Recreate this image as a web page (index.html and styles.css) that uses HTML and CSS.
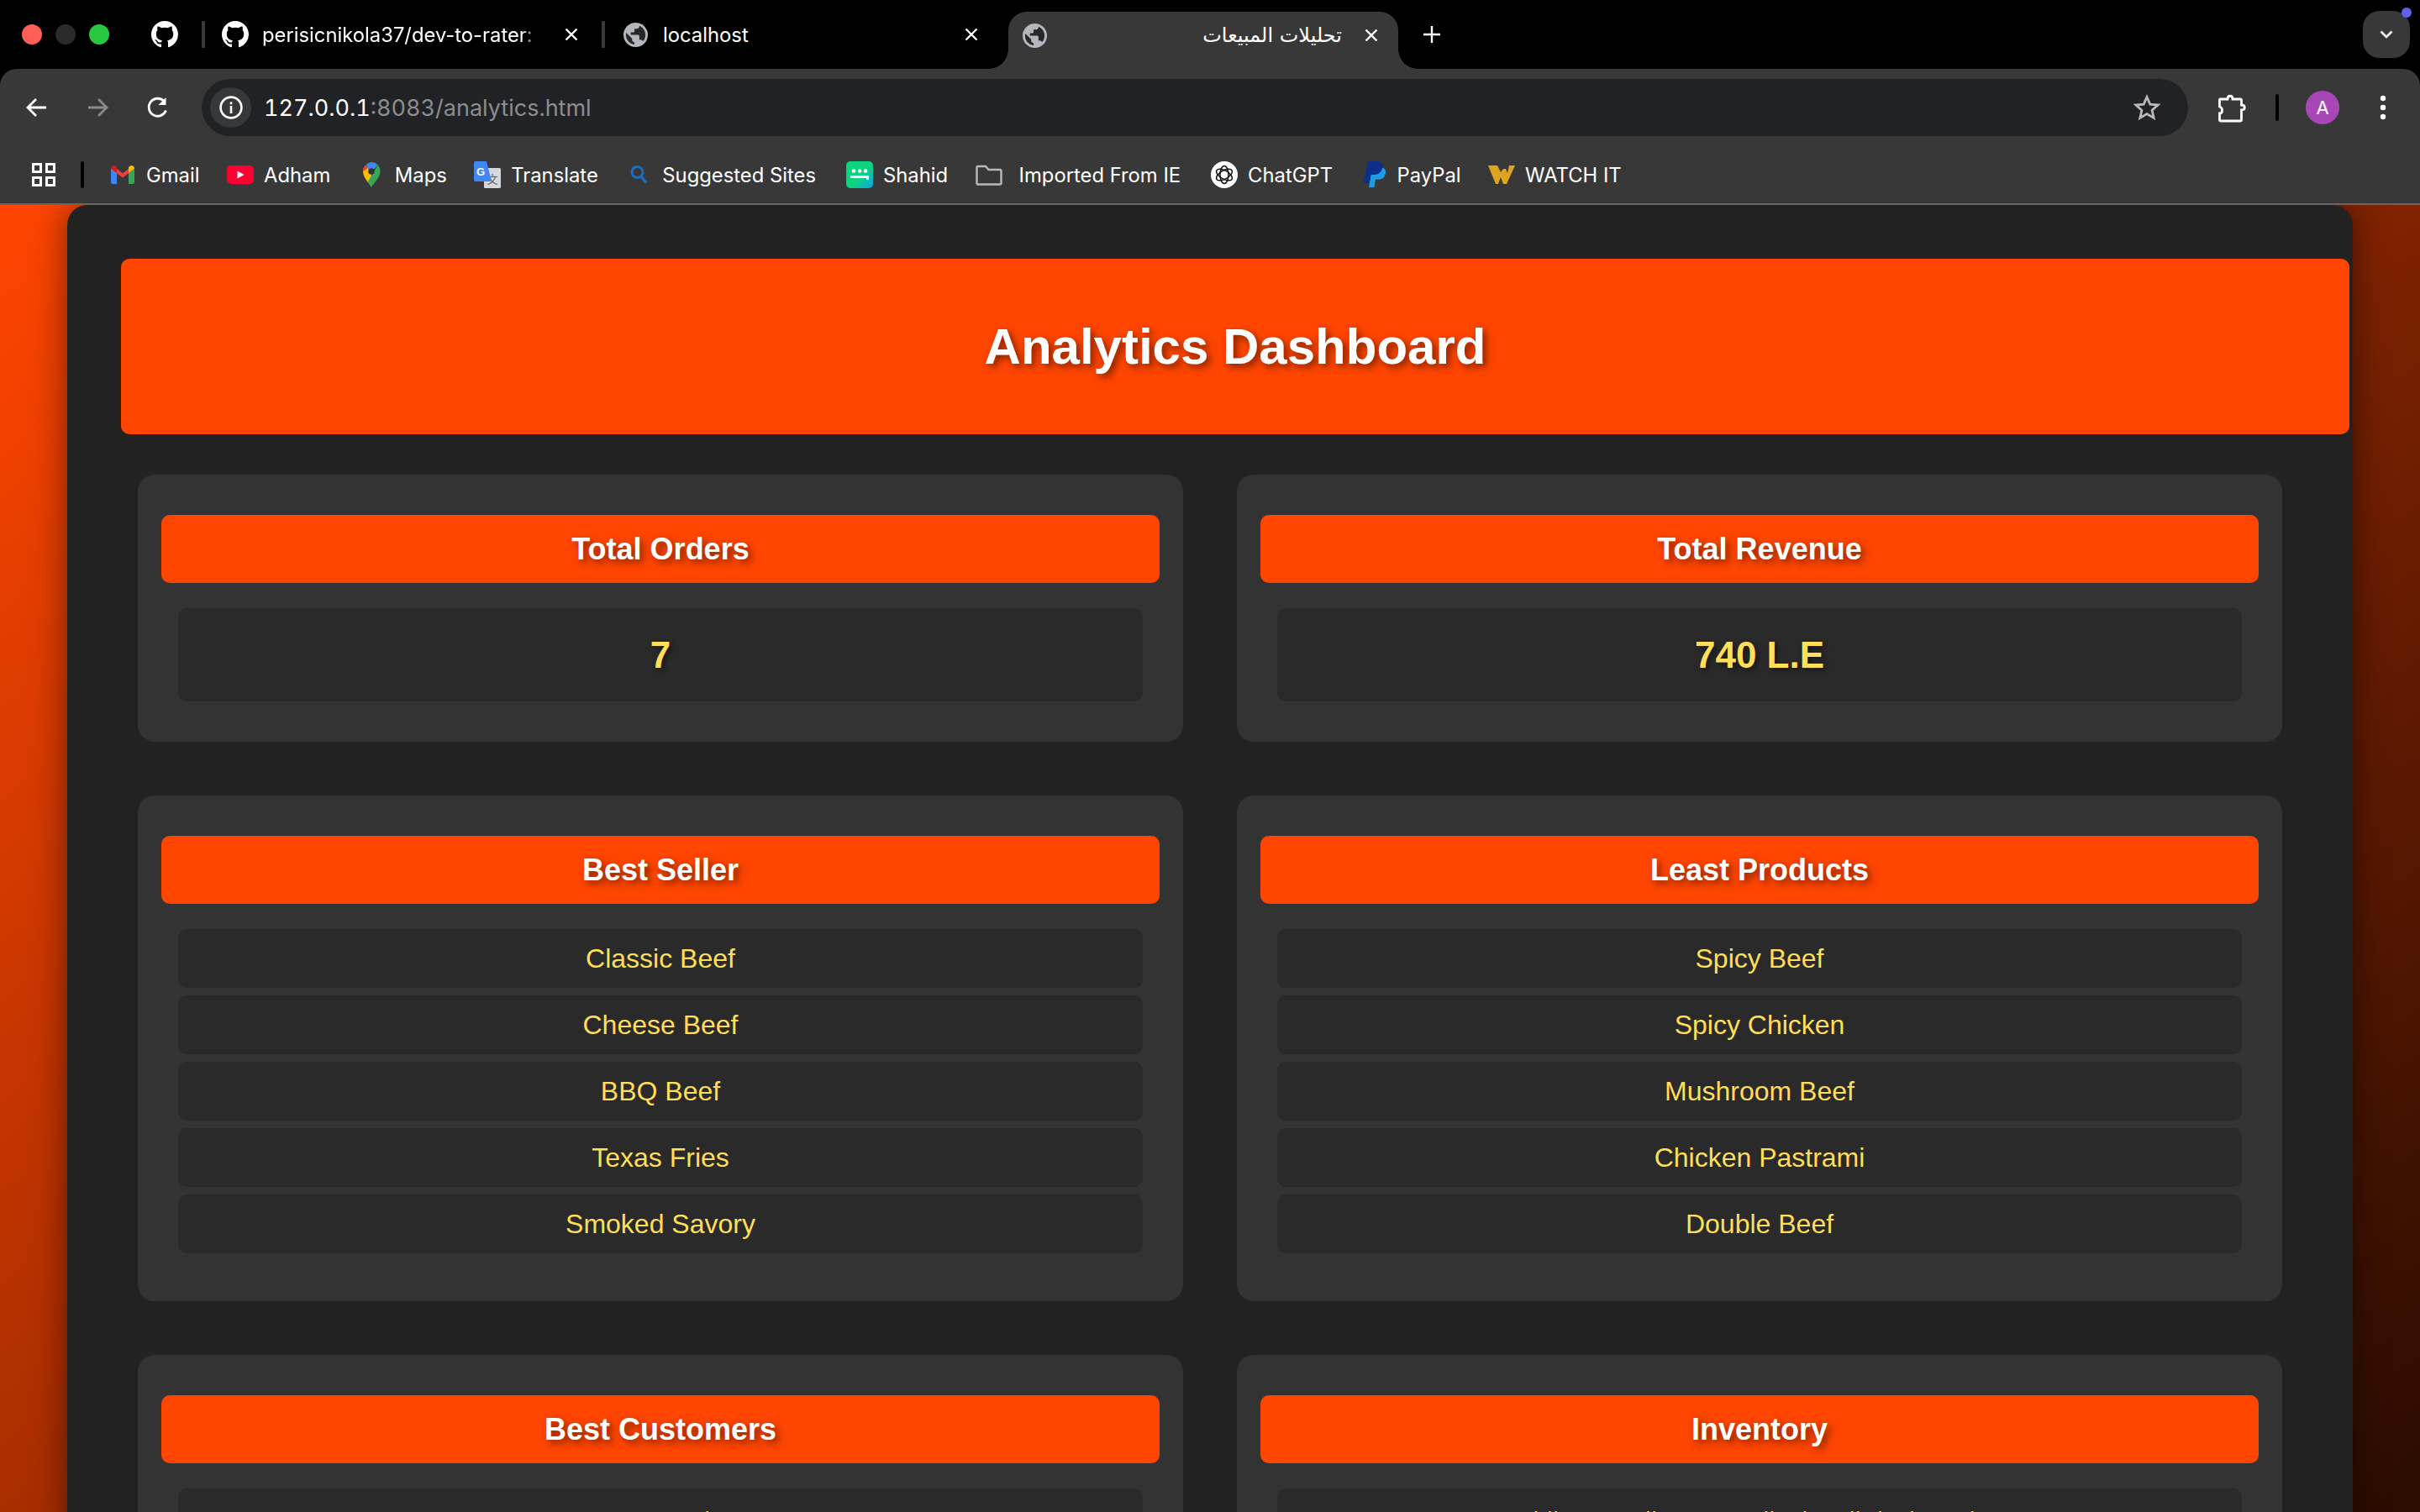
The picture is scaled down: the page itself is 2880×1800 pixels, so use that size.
FILE: index.html
```html
<!DOCTYPE html>
<html lang="en">
<head>
<meta charset="utf-8">
<title>تحليلات المبيعات</title>
<link rel="stylesheet" href="styles.css">
</head>
<body>
<svg class="defs" width="0" height="0" aria-hidden="true">
  <symbol id="gh" viewBox="0 0 16 16"><path fill="#fff" d="M8 0C3.58 0 0 3.58 0 8c0 3.54 2.29 6.53 5.47 7.59.4.07.55-.17.55-.38 0-.19-.01-.82-.01-1.49-2.01.37-2.53-.49-2.69-.94-.09-.23-.48-.94-.82-1.13-.28-.15-.68-.52-.01-.53.63-.01 1.08.58 1.23.82.72 1.21 1.87.87 2.33.66.07-.52.28-.87.51-1.07-1.78-.2-3.64-.89-3.64-3.95 0-.87.31-1.59.82-2.15-.08-.2-.36-1.02.08-2.12 0 0 .67-.21 2.2.82.64-.18 1.32-.27 2-.27.68 0 1.36.09 2 .27 1.53-1.04 2.2-.82 2.2-.82.44 1.1.16 1.92.08 2.12.51.56.82 1.27.82 2.15 0 3.07-1.87 3.75-3.65 3.95.29.25.54.73.54 1.48 0 1.07-.01 1.93-.01 2.2 0 .21.15.46.55.38A8.013 8.013 0 0016 8c0-4.42-3.58-8-8-8z"/></symbol>
  <symbol id="globe" viewBox="2 2 20 20"><circle cx="12" cy="12" r="10" fill="#b4b7bb"/><path fill="#26282b" d="M11 19.93c-3.95-.49-7-3.85-7-7.93 0-.62.08-1.21.21-1.79L9 15v1c0 1.1.9 2 2 2v1.93z"/><path fill="#26282b" d="M17.9 17.39c-.26-.81-1-1.39-1.9-1.39h-1v-3c0-.55-.45-1-1-1H8v-2h2c.55 0 1-.45 1-1V7h2c1.1 0 2-.9 2-2v-.41c2.93 1.19 5 4.06 5 7.41 0 2.08-.8 3.97-2.1 5.39z"/></symbol>
  <symbol id="close" viewBox="0 0 18 18"><path d="M2.5 2.5l13 13M15.5 2.5l-13 13" stroke="#fff" stroke-width="2.4" fill="none"/></symbol>
</svg>
<div class="app">
  <header class="tabstrip">
    <div class="traffic">
      <span class="light red"></span><span class="light grey"></span><span class="light green"></span>
    </div>
    <div class="pinned"><svg class="fav"><use href="#gh"/></svg></div>
    <span class="tabsep"></span>
    <div class="tab tab-gh">
      <svg class="fav"><use href="#gh"/></svg>
      <span class="tabtitle fade">perisicnikola37/dev-to-rater: A tool</span>
      <svg class="tabclose"><use href="#close"/></svg>
    </div>
    <span class="tabsep"></span>
    <div class="tab tab-local">
      <svg class="fav-globe"><use href="#globe"/></svg>
      <span class="tabtitle">localhost</span>
      <svg class="tabclose"><use href="#close"/></svg>
    </div>
    <div class="tab tab-active">
      <svg class="fav-globe"><use href="#globe"/></svg>
      <span class="tabtitle arabic" dir="rtl">تحليلات المبيعات</span>
      <svg class="tabclose"><use href="#close"/></svg>
    </div>
    <svg class="newtab" viewBox="0 0 20 20"><path d="M10 0v20M0 10h20" stroke="#fff" stroke-width="2.4"/></svg>
    <div class="tabsearch">
      <svg viewBox="0 0 16 10" class="chev"><path d="M1.5 1.5L8 8l6.5-6.5" fill="none" stroke="#fff" stroke-width="2.6"/></svg>
      <span class="notify"></span>
    </div>
  </header>

  <div class="toolbar">
    <div class="navrow">
      <svg class="nav" viewBox="0 0 32 32"><path d="M27 16H6M15 6L5 16l10 10" fill="none" stroke="#fff" stroke-width="2.8"/></svg>
      <svg class="nav" viewBox="0 0 32 32"><path d="M5 16h21M17 6l10 10-10 10" fill="none" stroke="#8b8b8b" stroke-width="2.8"/></svg>
      <svg class="nav" viewBox="0 0 32 32"><path d="M25.5 19.5A10.5 10.5 0 1 1 23.4 8.6" fill="none" stroke="#fff" stroke-width="2.8"/><path d="M25.5 4v9h-9z" fill="#fff"/></svg>
      <div class="omnibox">
        <span class="infochip"><svg viewBox="0 0 28 28" class="info"><circle cx="14" cy="14" r="12.4" fill="none" stroke="#fff" stroke-width="2.6"/><rect x="12.7" y="12" width="2.6" height="9" fill="#fff"/><rect x="12.7" y="7.4" width="2.6" height="2.8" fill="#fff"/></svg></span>
        <span class="url"><span class="url-host">127.0.0.1</span>:8083/analytics.html</span>
        <svg class="star" viewBox="0 0 32 32"><path d="M16 3.5l3.8 8.6 9.3.9-7 6.2 2.1 9.2-8.2-4.8-8.2 4.8 2.1-9.2-7-6.2 9.3-.9z" fill="none" stroke="#b9b9b9" stroke-width="2.8"/></svg>
      </div>
      <svg class="puzzle" viewBox="0 0 34 36"><path d="M2 8h9c0-5 6-5 6 0h9c1 0 1.500.5 1.500 1.500V15c5 0 5 6 0 6v11.500c0 1-.5 1.500-1.500 1.500H3c-1 0-1.500-.5-1.500-1.500V25c4 0 4-7 0-8V9.500C1.500 8.500 1.500 8 2 8z" fill="none" stroke="#fff" stroke-width="2.800"/></svg>
      <span class="toolsep"></span>
      <span class="avatar">A</span>
      <svg class="kebab" viewBox="0 0 8 30"><circle cx="4" cy="4" r="3.200" fill="#fff"/><circle cx="4" cy="15" r="3.200" fill="#fff"/><circle cx="4" cy="26" r="3.200" fill="#fff"/></svg>
    </div>
    <nav class="bookmarks">
      <svg class="apps" viewBox="0 0 28 28"><g fill="none" stroke="#fff" stroke-width="3"><rect x="1.500" y="1.500" width="9" height="9"/><rect x="17.500" y="1.500" width="9" height="9"/><rect x="1.500" y="17.500" width="9" height="9"/><rect x="17.500" y="17.500" width="9" height="9"/></g></svg>
      <span class="marksep"></span>
      <a class="mark">
        <svg class="bm" viewBox="0 0 32 32"><path d="M2 8h7v19H4a2 2 0 0 1-2-2z" fill="#4285f4"/><path d="M23 8h7v17a2 2 0 0 1-2 2h-5z" fill="#34a853"/><path d="M2 9l14 10.500L30 9v-.500l-7 .500-7 5.500L9 9 2 8z" fill="#ea4335"/><path d="M2 8.500C2 5 6 4 8 6l1 1v7z" fill="#c5221f"/><path d="M23 7l1-1c2-2 6-1 6 2.500L23 14z" fill="#fbbc04"/></svg>
        <span>Gmail</span>
      </a>
      <a class="mark">
        <svg class="bm" viewBox="0 0 32 32"><rect x="0" y="5" width="32" height="22" rx="5" fill="#ff0033"/><path d="M12.500 11.500l8 4.500-8 4.500z" fill="#fff"/></svg>
        <span>Adham</span>
      </a>
      <a class="mark">
        <svg class="bm" viewBox="0 0 32 32"><path d="M16 31c-2-5-10-11-10-19 0-3 1-5 3-7l7 8z" fill="#fbbc04"/><path d="M9.500 4.500A10.500 10.500 0 0 0 6 12l5-3z" fill="#ea4335"/><path d="M9.500 4.500C11.500 2.500 14 1 16.500 1c3 0 5.500 1.500 7 3.500L16 13z" fill="#4285f4"/><path d="M23.500 4.500C25.500 6.500 26.500 9 26.500 12c0 8-8.500 14-10.500 19-.8-2-2.500-4.200-4.200-6.500z" fill="#34a853"/><circle cx="16" cy="12" r="3.800" fill="#333"/></svg>
        <span>Maps</span>
      </a>
      <a class="mark">
        <svg class="bm" viewBox="0 0 32 32"><rect x="12" y="8" width="20" height="24" rx="1.500" fill="#d5d8dc"/><text x="22" y="26" class="glyph-zh">文</text><path d="M0 1.500C0 .7.700 0 1.500 0H15l6 24H1.500C.7 24 0 23.300 0 22.500z" fill="#4285f4"/><text x="8" y="17" class="glyph-g">G</text></svg>
        <span>Translate</span>
      </a>
      <a class="mark mark-wide">
        <svg class="bm" viewBox="0 0 32 32"><circle cx="14.500" cy="13" r="6.500" fill="none" stroke="#1a6ec2" stroke-width="3"/><path d="M19 18l6 7.500" stroke="#1a6ec2" stroke-width="3.400"/></svg>
        <span>Suggested Sites</span>
      </a>
      <a class="mark">
        <svg class="bm" viewBox="0 0 32 32"><defs><linearGradient id="sh" x1="0.200" y1="0.300" x2="1" y2="1"><stop offset="0.400" stop-color="#0bd47f"/><stop offset="1" stop-color="#0aa4e8"/></linearGradient></defs><rect width="32" height="32" rx="5" fill="url(#sh)"/><circle cx="9" cy="11.500" r="2.300" fill="#fff"/><circle cx="16" cy="11.500" r="2.300" fill="#fff"/><circle cx="23" cy="11.500" r="2.300" fill="#fff"/><path d="M5 17h22v5h-3v-2H5z" fill="#fff"/></svg>
        <span>Shahid</span>
      </a>
      <a class="mark mark-wide">
        <svg class="bm" viewBox="0 0 32 32"><path d="M1.500 7.500c0-1 .5-1.500 1.500-1.500h9l3.500 4H29c1 0 1.500.5 1.500 1.500V26c0 1-.5 1.500-1.500 1.500H3c-1 0-1.500-.5-1.500-1.500z" fill="none" stroke="#b9b9b9" stroke-width="2.400"/></svg>
        <span class="mark-folder">Imported From IE</span>
      </a>
      <a class="mark">
        <svg class="bm" viewBox="0 0 32 32"><circle cx="16" cy="16" r="16" fill="#fff"/><g fill="none" stroke="#111" stroke-width="1.500"><ellipse cx="16" cy="16" rx="5" ry="10.500"/><ellipse cx="16" cy="16" rx="5" ry="10.500" transform="rotate(60 16 16)"/><ellipse cx="16" cy="16" rx="5" ry="10.500" transform="rotate(120 16 16)"/></g></svg>
        <span>ChatGPT</span>
      </a>
      <a class="mark">
        <svg class="bm" viewBox="0 0 32 32"><path d="M14 8h12c3 0 4.500 2.500 4 6-.7 5-4 7.500-8 7.500h-4l-1.500 9.500H10z" fill="#1c9be6"/><path d="M9 0h11c5 0 7 3 6.300 7-1 6-5 9-10 9h-4l-1.700 10H3.500z" fill="#0b2f8a"/></svg>
        <span>PayPal</span>
      </a>
      <a class="mark">
        <svg class="bm" viewBox="0 0 32 32"><path d="M0 5h11l4 8 3-4h3l2 5 2-9h7L22 27h-4l-3-8-3 8H9z" fill="#dda321"/></svg>
        <span>WATCH IT</span>
      </a>
    </nav>
  </div>

  <main class="viewport">
    <div class="container">
      <h1 class="page-title">Analytics Dashboard</h1>
      <div class="grid">
        <section class="card">
          <h2 class="card-title">Total Orders</h2>
          <div class="stat">7</div>
        </section>
        <section class="card">
          <h2 class="card-title">Total Revenue</h2>
          <div class="stat">740 L.E</div>
        </section>
        <section class="card">
          <h2 class="card-title">Best Seller</h2>
          <ul class="list">
            <li>Classic Beef</li><li>Cheese Beef</li><li>BBQ Beef</li><li>Texas Fries</li><li>Smoked Savory</li>
          </ul>
        </section>
        <section class="card">
          <h2 class="card-title">Least Products</h2>
          <ul class="list">
            <li>Spicy Beef</li><li>Spicy Chicken</li><li>Mushroom Beef</li><li>Chicken Pastrami</li><li>Double Beef</li>
          </ul>
        </section>
        <section class="card">
          <h2 class="card-title">Best Customers</h2>
          <ul class="list"><li class="ar">احمد حسن</li></ul>
        </section>
        <section class="card">
          <h2 class="card-title">Inventory</h2>
          <ul class="list"><li class="ar">قائمة تفاصيل المنتجات المتوفرة في المخزون حاليا</li></ul>
        </section>
      </div>
    </div>
  </main>
</div>
</body>
</html>
```
FILE: styles.css
```css
* { box-sizing: border-box; }
html, body { margin: 0; padding: 0; height: 1800px; overflow: hidden; background: #000; }
.defs { display: block; height: 0; }
.app { display: flex; flex-direction: column; width: 2880px; height: 1800px; font-family: Inter, "Noto Sans", sans-serif; color: #fff; }

/* tab strip */
.tabstrip { display: flex; align-items: center; height: 82px; flex: none; background: #000; }
.traffic { display: flex; gap: 16px; width: 180px; padding-left: 26px; flex: none; }
.light { width: 24px; height: 24px; border-radius: 50%; }
.red { background: #ff5f57; }
.grey { background: #2b2b2b; }
.green { background: #28c840; }
.pinned { width: 60px; flex: none; display: flex; }
.fav { width: 32px; height: 32px; flex: none; }
.fav-globe { width: 29px; height: 29px; flex: none; }
.tabsep { width: 4px; height: 32px; background: #3a3a3a; flex: none; border-radius: 1px; }
.tab { display: flex; align-items: center; flex: none; height: 68px; font-size: 23.800px; }
.tab-gh { width: 472px; padding: 0 27px 0 20px; gap: 16px; }
.tab-local { width: 480px; padding: 0 35px 0 22px; gap: 18px; }
.tab-active { position: relative; width: 464px; padding: 0 23px 12px 17px; align-self: flex-end; background: #383838; border-radius: 22px 22px 0 0; }
.tab-active::before, .tab-active::after { content: ""; position: absolute; bottom: 0; width: 23px; height: 23px; }
.tab-active::before { left: -23px; background: radial-gradient(circle at 0 0, transparent 22.500px, #383838 23px); }
.tab-active::after { right: -23px; background: radial-gradient(circle at 100% 0, transparent 22.500px, #383838 23px); }
.tabtitle { white-space: nowrap; overflow: hidden; }
.fade { width: 336px; flex: none; -webkit-mask-image: linear-gradient(90deg, #000 92%, transparent 98%); mask-image: linear-gradient(90deg, #000 92%, transparent 98%); }
.arabic { margin-left: auto; margin-right: 26px; font-family: "DejaVu Sans", sans-serif; font-size: 24px; }
.tabclose { width: 18px; height: 18px; margin-left: auto; flex: none; }
.tab-active .tabclose { margin-left: 0; }
.newtab { width: 20px; height: 20px; margin-left: 30px; flex: none; }
.tabsearch { position: relative; display: flex; align-items: center; justify-content: center; width: 56px; height: 56px; margin: 0 12px 0 auto; background: #383838; border-radius: 20px; flex: none; }
.chev { width: 16px; height: 10px; }
.notify { position: absolute; top: -4px; right: -2px; width: 12px; height: 12px; border-radius: 50%; background: #5b62f0; }

/* toolbar */
.toolbar { flex: none; height: 162px; background: #383838; border-bottom: 2px solid #666; border-radius: 20px 20px 0 0; }
.navrow { display: flex; align-items: center; height: 92px; padding-left: 28px; }
.nav { width: 32px; height: 32px; margin-right: 40px; flex: none; }
.nav:nth-of-type(3) { margin-right: 36px; }
.omnibox { display: flex; align-items: center; width: 2364px; height: 68px; padding: 0 33px 0 10px; background: #212226; border-radius: 34px; flex: none; }
.infochip { display: flex; align-items: center; justify-content: center; width: 49px; height: 48px; border-radius: 50%; background: #37383a; flex: none; }
.info { width: 28px; height: 28px; }
.url { margin-left: 15px; font-size: 27px; font-variant-numeric: tabular-nums; color: #8d8d8d; white-space: nowrap; }
.url-host { color: #fff; }
.star { width: 32px; height: 32px; margin-left: auto; flex: none; }
.puzzle { width: 34px; height: 36px; margin-left: 36px; flex: none; }
.toolsep { width: 4px; height: 32px; margin-left: 34px; background: #000; border-radius: 2px; flex: none; }
.avatar { display: flex; align-items: center; justify-content: center; width: 40px; height: 40px; margin-left: 32px; border-radius: 50%; background: #a846b8; font-size: 22px; flex: none; }
.kebab { width: 8px; height: 30px; margin-left: 48px; flex: none; }

.bookmarks { display: flex; align-items: center; height: 68px; padding-left: 38px; font-size: 23.800px; }
.apps { width: 28px; height: 28px; flex: none; }
.marksep { width: 4px; height: 32px; margin: 0 30px 0 30px; background: #000; border-radius: 2px; flex: none; }
.mark { display: flex; align-items: center; gap: 12px; margin-right: 32.500px; white-space: nowrap; color: #fff; }
.mark-wide { margin-right: 36px; }
.mark-folder { margin-left: 8px; }
.bm { width: 32px; height: 32px; flex: none; }
.glyph-zh { font-family: "Noto Sans CJK SC", sans-serif; font-size: 13px; fill: #5f6368; text-anchor: middle; }
.glyph-g { font-family: "Liberation Sans", sans-serif; font-size: 13px; font-weight: 700; fill: #fff; text-anchor: middle; }

/* page */
.viewport { flex: 1; min-height: 0; overflow: hidden; background: linear-gradient(to bottom right, #ff4500, #000) 0 0 / 100% 2300px no-repeat; font-family: "Liberation Sans", "DejaVu Sans", sans-serif; }
.container { width: 2720px; margin-left: 80px; padding: 64px 0 0 64px; background: #222; border-radius: 24px 24px 0 0; box-shadow: 0 0 40px rgba(0, 0, 0, .5); min-height: 2400px; }
.page-title { display: flex; align-items: center; justify-content: center; width: 2652px; height: 209px; margin: 0 0 48px; background: #ff4500; border-radius: 10px; font-size: 60px; font-weight: 700; color: #fff; text-shadow: 4px 4px 8px rgba(0, 0, 0, .5); }
.grid { display: grid; grid-template-columns: 1244px 1244px; gap: 64px; margin-left: 20px; }
.card { padding: 48px 28px; background: #333; border-radius: 20px; }
.card-title { display: flex; align-items: center; justify-content: center; height: 81px; margin: 0 0 30px; background: #ff4500; border-radius: 10px; font-size: 36px; font-weight: 700; color: #fff; text-shadow: 4px 4px 8px rgba(0, 0, 0, .5); }
.stat { display: flex; align-items: center; justify-content: center; height: 111px; margin: 0 20px; background: #2a2a2a; border-radius: 10px; font-size: 44px; font-weight: 700; color: #ffde59; text-shadow: 3px 3px 6px rgba(0, 0, 0, .5); }
.list { list-style: none; margin: 0 20px; padding: 0; }
.list li { display: flex; align-items: center; justify-content: center; height: 70px; margin-bottom: 9px; background: #2a2a2a; border-radius: 10px; font-size: 32px; color: #ffde59; }
.list .ar { padding-top: 6px; font-size: 26px; }
```
